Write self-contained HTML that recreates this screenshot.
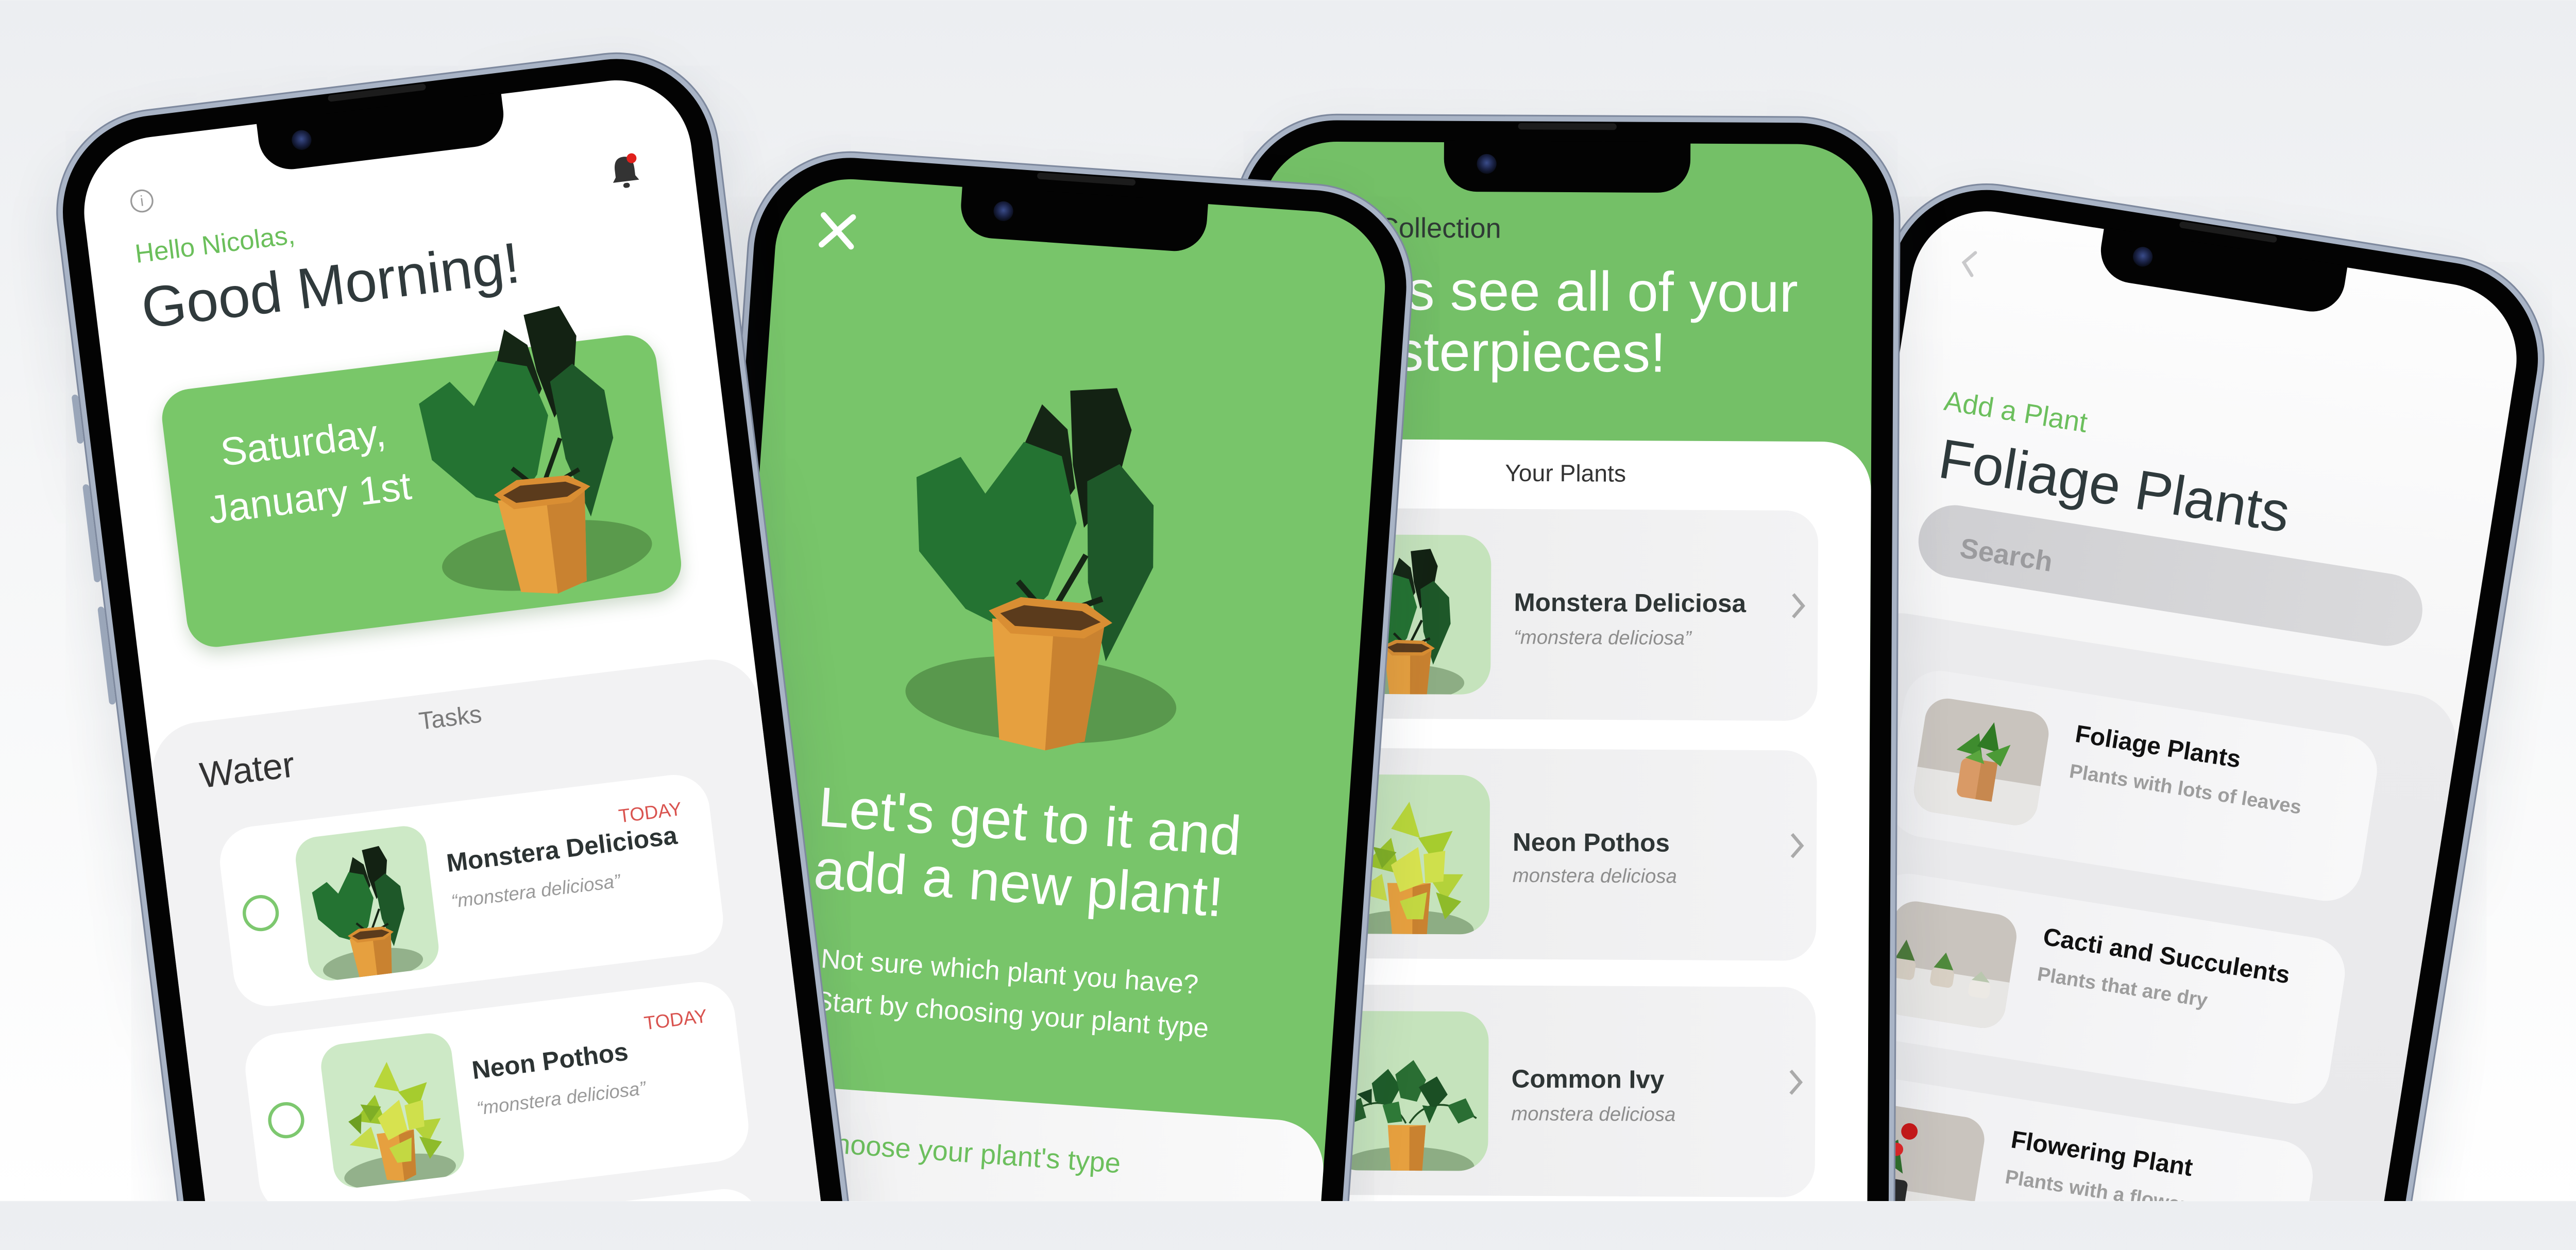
<!DOCTYPE html>
<html><head><meta charset="utf-8"><style>
*{box-sizing:border-box}
html,body{margin:0;padding:0;width:100vw;overflow:hidden}
html,body{height:2426px}
body{background:linear-gradient(180deg,#eceef1 0%,#f5f6f7 40%,#ffffff 100%);position:relative}
#s{position:absolute;left:0;top:0;width:1568px;height:731.2px;overflow:hidden;transform:scale(3.3176);transform-origin:0 0;font-family:"Liberation Sans",sans-serif}
.w{position:absolute;transform-origin:0 0}
.fr{position:absolute;left:-16px;top:-16px;width:404px;height:900px;border-radius:62px;background:#030303;border:3.5px solid #a9b4c6;box-shadow:0 0 0 1px #7e899e,0 14px 34px rgba(40,50,70,.16)}
.spk{position:absolute;left:156px;top:-12px;width:60px;height:4px;border-radius:3px;background:#1c1c1c}
.sc{position:absolute;left:0;top:0;width:372px;height:868px;border-radius:46px;overflow:hidden}
.notch{position:absolute;left:111px;top:-1px;width:150px;height:31px;background:#030303;border-radius:0 0 20px 20px;z-index:5}
.cam{position:absolute;left:20px;top:8px;width:12px;height:12px;border-radius:50%;background:radial-gradient(circle at 50% 45%,#3a4c8a 0,#1a2245 45%,#0b0f1e 70%)}
.btn{position:absolute;width:4px;background:#9aa6b9;border-radius:2px}
.t{position:absolute;line-height:1;white-space:nowrap}
.card{position:absolute}
</style></head><body>
<svg width="0" height="0" style="position:absolute">
<defs>
<symbol id="mon" viewBox="0 0 160 200">
<ellipse cx="80" cy="172" rx="70" ry="22" fill="rgba(25,60,15,0.32)"/>
<polygon points="62,42 70,20 84,32 90,62 78,82 66,70" fill="#152615"/>
<polygon points="84,12 108,9 117,30 111,62 96,82 88,50" fill="#132213"/>
<polygon points="8,62 30,50 44,68 62,40 82,46 92,80 80,118 62,138 38,128 12,100" fill="#247332"/>
<polygon points="96,58 112,48 131,68 133,100 112,150 100,110" fill="#1e5829"/>
<path d="M80 128 L64 112 M82 128 L98 96 M85 128 L108 118" stroke="#152615" stroke-width="3" fill="none"/>
<polygon points="52,132 110,132 104,192 84,198 60,194" fill="#e6a03f"/>
<polygon points="84,136 110,132 104,192 84,198" fill="#c98230"/>
<polygon points="50,128 66,120 100,121 114,130 100,139 62,139" fill="#d98e33"/>
<polygon points="56,129 68,124 98,125 108,130 98,135 64,135" fill="#5b3b1c"/>
</symbol>
<symbol id="pot" viewBox="0 0 160 200">
<ellipse cx="80" cy="172" rx="72" ry="22" fill="rgba(25,60,15,0.32)"/>
<polygon points="56,120 104,120 100,178 84,184 62,180" fill="#e6a03f"/>
<polygon points="84,124 104,120 100,178 84,184" fill="#c98230"/>
<polygon points="30,100 60,70 70,110" fill="#9cc52c"/>
<polygon points="60,60 80,30 92,70" fill="#b8d63a"/>
<polygon points="90,70 128,62 110,100" fill="#a6cc2e"/>
<polygon points="20,130 50,110 56,140" fill="#c7dc4a"/>
<polygon points="100,110 140,110 120,140" fill="#b4d23a"/>
<polygon points="60,100 90,80 96,120 70,130" fill="#d7e24f"/>
<polygon points="40,80 66,86 50,104" fill="#7fae26"/>
<polygon points="96,88 120,84 118,118 98,120" fill="#cfe04c"/>
<polygon points="70,140 100,130 96,160 78,160" fill="#c3d842"/>
<polygon points="110,130 138,140 120,160" fill="#8ebb2a"/>
<polygon points="22,100 40,92 36,118" fill="#6d9f22"/>
</symbol>
<symbol id="ivy" viewBox="0 0 160 200">
<ellipse cx="80" cy="172" rx="74" ry="22" fill="rgba(25,60,15,0.32)"/>
<polygon points="58,126 100,126 96,180 82,186 62,182" fill="#e6a03f"/>
<polygon points="82,128 100,126 96,180 82,186" fill="#c98230"/>
<path d="M78 124 C60 90 30 100 8 120 M82 124 C100 95 130 100 156 118" stroke="#1f4d22" stroke-width="2" fill="none"/>
<polygon points="40,80 58,64 72,84 60,106 44,100" fill="#1f5d2a"/>
<polygon points="66,70 86,54 100,76 90,100 72,96" fill="#2a6e33"/>
<polygon points="92,84 112,72 124,92 108,110" fill="#1b4f24"/>
<polygon points="10,106 28,96 34,118 18,124" fill="#245f2b"/>
<polygon points="124,104 144,96 154,116 136,124" fill="#2a6e33"/>
<polygon points="24,92 40,86 40,104" fill="#174420"/>
<polygon points="52,104 70,100 74,122 58,124" fill="#2f7a38"/>
<polygon points="96,104 112,106 104,124" fill="#1f5d2a"/>
</symbol>
</defs>
</svg>
<div id="s">

<!-- PHONE 4 -->
<div class="w" style="left:1171px;top:122.4px;transform:rotate(9deg);z-index:1">
 <div class="fr"></div><div class="spk"></div>
 <div class="sc" style="background:linear-gradient(180deg,#fdfdfd 0%,#f3f3f4 40%,#e9e9eb 100%)">
  <svg style="position:absolute;left:28px;top:25px" width="10" height="17" viewBox="0 0 10 17"><path d="M8 1.5 L2 8.5 L8 15.5" stroke="#c9c9cb" stroke-width="2" fill="none" stroke-linecap="round"/></svg>
  <div class="t" style="left:31.5px;top:109.6px;font-size:17px;color:#6cbf5d">Add a Plant</div>
  <div class="t" style="left:34px;top:137.2px;font-size:34px;color:#2f3a3c">Foliage Plants</div>
  <div style="position:absolute;left:29px;top:180px;width:310px;height:44px;border-radius:22px;background:linear-gradient(90deg,#cfcfd2,#dadadc)"></div>
  <div class="t" style="left:55px;top:196.6px;font-size:17px;font-weight:bold;color:#9b9b9e">Search</div>
  <div style="position:absolute;left:0;top:250px;width:372px;height:700px;border-radius:30px 30px 0 0;background:linear-gradient(180deg,#ebebed,#e6e6e8)"></div>
  <div class="card" style="left:36px;top:281px;width:291px;height:102px;border-radius:22px;background:linear-gradient(90deg,#efeff1,#f8f8f9)">
   <svg style="position:absolute;left:14px;top:16px;border-radius:14px" width="76" height="70" viewBox="0 0 76 70"><rect width="76" height="70" fill="#c9c4be"/><rect y="44" width="76" height="26" fill="#e7e6e4"/><rect x="26" y="34" width="22" height="24" rx="4" fill="#d99a66"/><rect x="38" y="34" width="10" height="24" fill="#c7884f"/><polygon points="22,30 34,18 38,32" fill="#3e8c2e"/><polygon points="34,26 42,10 48,28" fill="#2f7a24"/><polygon points="40,30 54,22 50,36" fill="#4b9a36"/><polygon points="28,34 36,28 40,36" fill="#5aa63e"/></svg>
   <div class="t" style="left:106px;top:17.9px;font-size:15px;font-weight:bold;color:#111">Foliage Plants</div>
   <div class="t" style="left:106px;top:41.8px;font-size:12px;font-weight:bold;color:#9d9d9d">Plants with lots of leaves</div>
  </div>
  <div class="card" style="left:36px;top:406px;width:291px;height:102px;border-radius:22px;background:linear-gradient(90deg,#efeff1,#f8f8f9)">
   <svg style="position:absolute;left:14px;top:16px;border-radius:14px" width="76" height="70" viewBox="0 0 76 70"><rect width="76" height="70" fill="#c9c4be"/><rect y="40" width="76" height="30" fill="#e7e6e4"/><rect x="4" y="36" width="14" height="12" rx="3" fill="#d8d0c4"/><rect x="28" y="38" width="14" height="11" rx="3" fill="#d8d0c4"/><rect x="52" y="42" width="13" height="10" rx="3" fill="#ece9e4"/><polygon points="5,36 10,24 17,36" fill="#4d7a3a"/><polygon points="29,38 35,28 41,38" fill="#4f8a3c"/><polygon points="53,42 58,36 64,42" fill="#b9c7ae"/></svg>
   <div class="t" style="left:106px;top:17.9px;font-size:15px;font-weight:bold;color:#111">Cacti and Succulents</div>
   <div class="t" style="left:106px;top:41.8px;font-size:12px;font-weight:bold;color:#9d9d9d">Plants that are dry</div>
  </div>
  <div class="card" style="left:36px;top:531px;width:291px;height:102px;border-radius:22px;background:linear-gradient(90deg,#efeff1,#f8f8f9)">
   <svg style="position:absolute;left:14px;top:16px;border-radius:14px" width="76" height="70" viewBox="0 0 76 70"><rect width="76" height="70" fill="#c9c4be"/><rect y="50" width="76" height="20" fill="#e7e6e4"/><rect x="14" y="44" width="20" height="26" rx="3" fill="#2a2a2a"/><polygon points="10,30 24,20 30,40" fill="#2f6e2a"/><circle cx="16" cy="18" r="5" fill="#d42020"/><circle cx="30" cy="14" r="5" fill="#c81818"/><circle cx="24" cy="26" r="4" fill="#e02626"/></svg>
   <div class="t" style="left:106px;top:17.9px;font-size:15px;font-weight:bold;color:#111">Flowering Plant</div>
   <div class="t" style="left:106px;top:41.8px;font-size:12px;font-weight:bold;color:#9d9d9d">Plants with a flower</div>
  </div>
 </div>
 <div class="notch"><div class="cam"></div></div>
</div>

<!-- PHONE 3 -->
<div class="w" style="left:767.7px;top:86px;transform:rotate(0.3deg);z-index:2">
 <div class="fr"></div><div class="spk"></div>
 <div class="sc" style="background:#74c067">
  <div class="t" style="left:44px;top:44.2px;font-size:17px;color:#2f3a35">My Collection</div>
  <div class="t" style="left:35px;top:74.2px;font-size:34px;color:#fff">Let's see all of your</div>
  <div class="t" style="left:35px;top:111.2px;font-size:34px;color:#fff">masterpieces!</div>
  <div style="position:absolute;left:0;top:181px;width:372px;height:780px;border-radius:30px 30px 0 0;background:#fff"></div>
  <div class="t" style="left:0;width:372px;text-align:center;top:194.7px;font-size:14.5px;color:#333">Your Plants</div>
  <div class="card" style="left:28px;top:223px;width:312px;height:128px;border-radius:20px;background:linear-gradient(90deg,#ececed,#f3f3f4)">
   <div style="position:absolute;left:16px;top:16px;width:97px;height:97px;border-radius:18px;background:#c5e3bc;overflow:hidden"><svg style="position:absolute;left:6px;top:4px" width="80" height="100"><use href="#mon"/></svg></div>
   <div class="t" style="left:127px;top:50.4px;font-size:15.5px;font-weight:bold;color:#2e3535">Monstera Deliciosa</div>
   <div class="t" style="left:127px;top:71.8px;font-size:12px;font-style:italic;color:#8d8d8d">“monstera deliciosa”</div>
   <svg style="position:absolute;left:295px;top:49px" width="10" height="18" viewBox="0 0 10 18"><path d="M2 2 L8 9 L2 16" stroke="#aaa" stroke-width="2" fill="none"/></svg>
  </div>
  <div class="card" style="left:28px;top:368.6px;width:312px;height:128px;border-radius:20px;background:linear-gradient(90deg,#ececed,#f3f3f4)">
   <div style="position:absolute;left:16px;top:16px;width:97px;height:97px;border-radius:18px;background:#c5e3bc;overflow:hidden"><svg style="position:absolute;left:4px;top:0px" width="88" height="110"><use href="#pot"/></svg></div>
   <div class="t" style="left:127px;top:50.4px;font-size:15.5px;font-weight:bold;color:#2e3535">Neon Pothos</div>
   <div class="t" style="left:127px;top:71.8px;font-size:12px;font-style:italic;color:#8d8d8d">monstera deliciosa</div>
   <svg style="position:absolute;left:295px;top:49px" width="10" height="18" viewBox="0 0 10 18"><path d="M2 2 L8 9 L2 16" stroke="#aaa" stroke-width="2" fill="none"/></svg>
  </div>
  <div class="card" style="left:28px;top:513px;width:312px;height:128px;border-radius:20px;background:linear-gradient(90deg,#ececed,#f3f3f4)">
   <div style="position:absolute;left:16px;top:16px;width:97px;height:97px;border-radius:18px;background:#c5e3bc;overflow:hidden"><svg style="position:absolute;left:2px;top:0px" width="92" height="110"><use href="#ivy"/></svg></div>
   <div class="t" style="left:127px;top:50.4px;font-size:15.5px;font-weight:bold;color:#2e3535">Common Ivy</div>
   <div class="t" style="left:127px;top:71.8px;font-size:12px;font-style:italic;color:#8d8d8d">monstera deliciosa</div>
   <svg style="position:absolute;left:295px;top:49px" width="10" height="18" viewBox="0 0 10 18"><path d="M2 2 L8 9 L2 16" stroke="#aaa" stroke-width="2" fill="none"/></svg>
  </div>
 </div>
 <div class="notch"><div class="cam"></div></div>
</div>

<!-- PHONE 2 -->
<div class="w" style="left:475.4px;top:105.9px;transform:rotate(4deg);z-index:3">
 <div class="fr"></div><div class="spk"></div>
 <div class="sc" style="background:#78c56a">
  <svg style="position:absolute;left:25px;top:19.5px" width="24" height="24" viewBox="0 0 24 24"><path d="M3 3 L21 21 M21 3 L3 21" stroke="#fff" stroke-width="3.5" stroke-linecap="round"/></svg>
  <svg style="position:absolute;left:86px;top:104.5px" width="189" height="236"><use href="#mon"/></svg>
  <div class="t" style="left:50px;top:366.2px;font-size:34px;color:#fff">Let's get to it and</div>
  <div class="t" style="left:50px;top:403.8px;font-size:34px;color:#fff">add a new plant!</div>
  <div class="t" style="left:58px;top:467px;font-size:16.5px;color:#fff">Not sure which plant you have?</div>
  <div class="t" style="left:56px;top:493px;font-size:16.5px;color:#fff">Start by choosing your plant type</div>
  <div style="position:absolute;left:0;top:553px;width:372px;height:400px;border-radius:30px 30px 0 0;background:linear-gradient(90deg,#f0f0f1,#fafafa)"></div>
  <div class="t" style="left:62px;top:577.6px;font-size:17px;color:#6cbf5d">Choose your plant's type</div>
 </div>
 <div class="notch"><div class="cam"></div></div>
</div>

<!-- PHONE 1 -->
<div class="w" style="left:45.7px;top:89.1px;transform:rotate(-7deg);z-index:4">
 <div class="fr"></div><div class="spk"></div>
 <div class="btn" style="left:-21px;top:150px;height:30px"></div>
 <div class="btn" style="left:-21px;top:205px;height:60px"></div>
 <div class="btn" style="left:-21px;top:280px;height:60px"></div>
 <div class="sc" style="background:#fff">
  <div style="position:absolute;left:29px;top:31px;width:14px;height:14px;border-radius:50%;border:1px solid #9a9a9a;font-size:9px;line-height:12px;text-align:center;color:#9a9a9a">i</div>
  <svg style="position:absolute;left:320px;top:45px" width="20" height="22" viewBox="0 0 20 22"><path d="M10 2 C5 2 4 6 4 10 L4 14 L2 17 L18 17 L16 14 L16 10 C16 6 15 2 10 2 Z" fill="#333"/><rect x="8" y="18" width="4" height="3" rx="1.5" fill="#333"/><circle cx="15" cy="3.5" r="3" fill="#e0201c"/></svg>
  <div class="t" style="left:28px;top:62.5px;font-size:16px;color:#6bbf5b">Hello Nicolas,</div>
  <div class="t" style="left:28px;top:86px;font-size:35px;color:#303a3c">Good Morning!</div>
  <div style="position:absolute;left:32px;top:155px;width:303px;height:158px;border-radius:18px;background:#79c769;box-shadow:0 4px 10px rgba(60,110,50,.25)"></div>
  <div class="t" style="left:15.5px;width:200px;text-align:center;top:184.7px;font-size:24px;color:#fff">Saturday,</div>
  <div class="t" style="left:15.5px;width:200px;text-align:center;top:218.7px;font-size:24px;color:#fff">January 1st</div>
  <svg style="position:absolute;left:181px;top:124px" width="147" height="184"><use href="#mon"/></svg>
  <div style="position:absolute;left:0;top:357px;width:372px;height:600px;border-radius:30px 30px 0 0;background:#f2f2f3"></div>
  <div class="t" style="left:0;width:368px;text-align:center;top:366px;font-size:15px;color:#7a7a7a">Tasks</div>
  <div class="t" style="left:28.5px;top:379.4px;font-size:22px;color:#333">Water</div>
  <div class="card" style="left:34px;top:424px;width:300px;height:110px;border-radius:22px;background:#fff">
   <div style="position:absolute;left:9.5px;top:42.4px;width:22px;height:22px;border-radius:50%;border:2.5px solid #7dc86f"></div>
   <div style="position:absolute;left:46px;top:11px;width:80px;height:88px;border-radius:14px;background:#cde9c6;overflow:hidden"><svg style="position:absolute;left:4px;top:6px" width="70" height="88"><use href="#mon"/></svg></div>
   <div class="t" style="right:17px;top:17.3px;font-size:11.5px;color:#d9534f">TODAY</div>
   <div class="t" style="left:137px;top:29.9px;font-size:15.5px;font-weight:bold;color:#2c3333">Monstera Deliciosa</div>
   <div class="t" style="left:137px;top:56.3px;font-size:11.5px;font-style:italic;color:#9a9a9a">“monstera deliciosa”</div>
  </div>
  <div class="card" style="left:34px;top:551px;width:300px;height:110px;border-radius:22px;background:#fff">
   <div style="position:absolute;left:9.5px;top:42.4px;width:22px;height:22px;border-radius:50%;border:2.5px solid #7dc86f"></div>
   <div style="position:absolute;left:46px;top:11px;width:80px;height:88px;border-radius:14px;background:#cde9c6;overflow:hidden"><svg style="position:absolute;left:2px;top:0px" width="76" height="95"><use href="#pot"/></svg></div>
   <div class="t" style="right:17px;top:17.3px;font-size:11.5px;color:#d9534f">TODAY</div>
   <div class="t" style="left:137px;top:29.9px;font-size:15.5px;font-weight:bold;color:#2c3333">Neon Pothos</div>
   <div class="t" style="left:137px;top:56.3px;font-size:11.5px;font-style:italic;color:#9a9a9a">“monstera deliciosa”</div>
  </div>
  <div class="card" style="left:34px;top:678px;width:300px;height:110px;border-radius:22px;background:#fff"></div>
 </div>
 <div class="notch"><div class="cam"></div></div>
</div>

</div>
<script>
(function(){
 var el=document.getElementById('s');
 function fit(){
  var w=document.documentElement.clientWidth||window.innerWidth;
  if(!(w>0)) return;
  var k=w/1568;
  el.style.transform='scale('+k+')';
  var h=Math.floor(731.2*k)+'px';
  document.documentElement.style.height=h;
  document.body.style.height=h;
 }
 fit();
 window.addEventListener('resize',fit);
})();
</script>
</body></html>
